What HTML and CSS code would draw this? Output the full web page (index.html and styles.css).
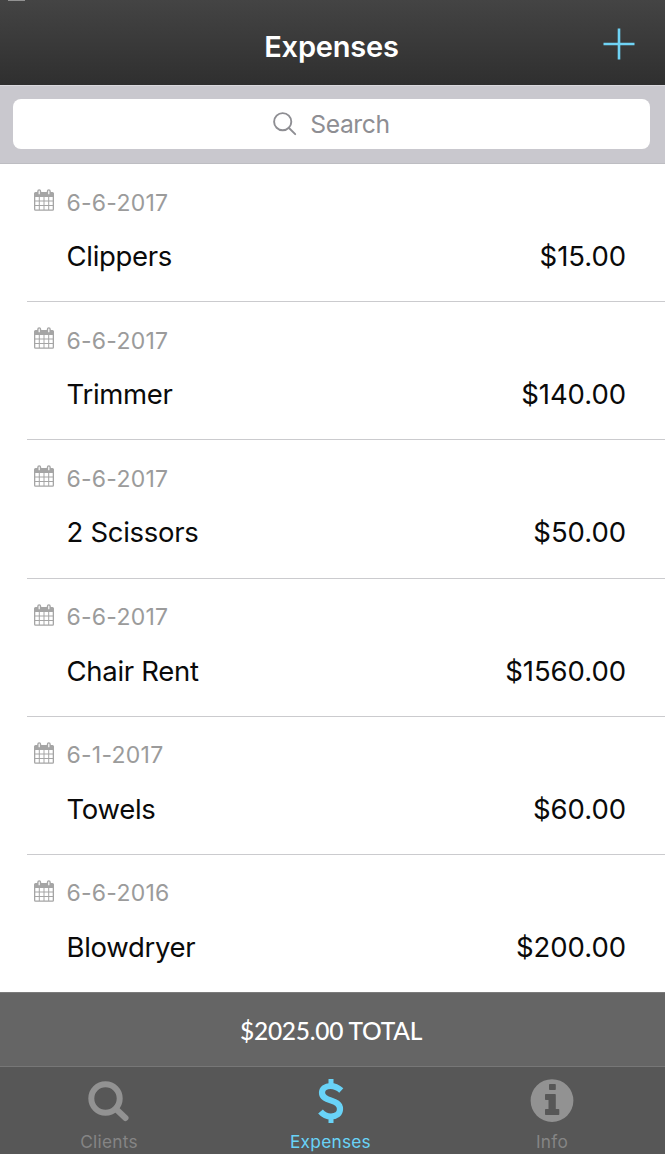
FILE: index.html
```html
<!DOCTYPE html>
<html lang="en">
<head>
<meta charset="utf-8">
<title>Expenses</title>
<link rel="stylesheet" href="styles.css">
</head>
<body>
<svg class="sprite" aria-hidden="true">
  <symbol id="calendar" viewBox="0 0 20 22">
    <path fill="currentColor" fill-rule="evenodd" d="M1.5 3H3.2V2.2a2 2 0 0 1 4 0V3H12.800V2.200a2 2 0 0 1 4 0V3h1.700A1.500 1.500 0 0 1 20 4.500v15.800A1.500 1.500 0 0 1 18.500 21.800h-17A1.500 1.500 0 0 1 0 20.300V4.500A1.500 1.500 0 0 1 1.500 3ZM1.300 8v3.400h3.500V8ZM5.800 8v3.400h3.700V8ZM10.500 8v3.400h3.700V8ZM15.200 8v3.400h3.500V8ZM1.300 12.400v3.700h3.500v-3.700ZM5.800 12.400v3.700h3.700v-3.700ZM10.500 12.400v3.700h3.700v-3.700ZM15.200 12.400v3.700h3.500v-3.700ZM1.300 17.100v3.500h3.500v-3.500ZM5.800 17.100v3.500h3.700v-3.500ZM10.500 17.100v3.500h3.700v-3.500ZM15.200 17.100v3.500h3.500v-3.500ZM4.600 2.200v3h1.200v-3a.6.6 0 0 0-1.200 0ZM14.200 2.200v3h1.200v-3a.6.6 0 0 0-1.200 0Z"/>
  </symbol>
</svg>
<div class="app">
  <header class="navbar">
    <span class="status-fragment"></span>
    <h1 class="title">Expenses</h1>
    <svg class="add" viewBox="0 0 32 32"><path d="M16 0.500V31.500M0.500 16H31.500"/></svg>
  </header>
  <div class="search-bar">
    <div class="search-field">
      <svg class="search-icon" viewBox="0 0 24 24"><circle cx="9.700" cy="9.700" r="8.600"/><path d="M16 16L22.200 22.200"/></svg>
      <span class="search-label">Search</span>
    </div>
  </div>
  <main class="list">
    <article class="row"><div class="date"><svg class="cal"><use href="#calendar"/></svg><span>6-6-2017</span></div><div class="entry"><span class="name">Clippers</span><span class="amount">$15.00</span></div></article>
    <article class="row"><div class="date"><svg class="cal"><use href="#calendar"/></svg><span>6-6-2017</span></div><div class="entry"><span class="name">Trimmer</span><span class="amount">$140.00</span></div></article>
    <article class="row"><div class="date"><svg class="cal"><use href="#calendar"/></svg><span>6-6-2017</span></div><div class="entry"><span class="name">2 Scissors</span><span class="amount">$50.00</span></div></article>
    <article class="row"><div class="date"><svg class="cal"><use href="#calendar"/></svg><span>6-6-2017</span></div><div class="entry"><span class="name">Chair Rent</span><span class="amount">$1560.00</span></div></article>
    <article class="row"><div class="date"><svg class="cal"><use href="#calendar"/></svg><span>6-1-2017</span></div><div class="entry"><span class="name">Towels</span><span class="amount">$60.00</span></div></article>
    <article class="row"><div class="date"><svg class="cal"><use href="#calendar"/></svg><span>6-6-2016</span></div><div class="entry"><span class="name">Blowdryer</span><span class="amount">$200.00</span></div></article>
  </main>
  <div class="total">$2025.00 TOTAL</div>
  <nav class="tabs">
    <div class="tab">
      <svg class="tab-icon" viewBox="0 0 44 46"><circle cx="18.500" cy="20.500" r="14.200" fill="none" stroke="currentColor" stroke-width="6"/><path d="M29 31L38.500 40" stroke="currentColor" stroke-width="6" stroke-linecap="round"/></svg>
      <span class="tab-label">Clients</span>
    </div>
    <div class="tab active">
      <svg class="tab-icon" viewBox="0 0 44 46"><path d="M22 1V8M22 39V45" stroke="currentColor" stroke-width="5"/><path d="M32.300 12.500C28.500 9.200 25.500 8 21.500 8C16.500 8 13 10.700 13 14.700C13 24.500 31 20.300 31 31C31 35.500 27.500 38.500 22 38.500C17.500 38.500 14.500 37 11.500 33.500" fill="none" stroke="currentColor" stroke-width="6.200"/></svg>
      <span class="tab-label">Expenses</span>
    </div>
    <div class="tab">
      <svg class="tab-icon" viewBox="0 0 44 46"><path fill="currentColor" fill-rule="evenodd" d="M22 1.200a21.400 21.400 0 1 1 0 42.800a21.400 21.400 0 1 1 0-42.800ZM19.800 6h5.200q.8 0 .8.800v4.400q0 .8-.8.800h-5.200q-.8 0-.8-.8V6.800q0-.8.8-.8ZM15.800 16h9.200q.8 0 .8.800V31h2.700q.8 0 .8.800v4.400q0 .8-.8.800H15.800q-.8 0-.8-.8v-4.400q0-.8.8-.8h2.700V22h-2.700q-.8 0-.8-.8v-4.400q0-.8.800-.8Z"/></svg>
      <span class="tab-label">Info</span>
    </div>
  </nav>
</div>
</body>
</html>
```
FILE: styles.css
```css
* { box-sizing: border-box; }
body { margin: 0; background: #fff; font-family: Inter, "Liberation Sans", sans-serif; }
.sprite { display: none; }
.app { width: 665px; height: 1154px; display: flex; flex-direction: column; overflow: hidden; }
.navbar { position: relative; height: 85px; flex: none; display: grid; grid-template-columns: 1fr auto 1fr; align-items: center; padding: 9px 30px 0 28px; background: linear-gradient(#444, #2f2f2f); }
.status-fragment { position: absolute; left: 8px; top: 0; width: 17px; height: 1px; background: #929292; }
.title { grid-column: 2; margin: 0; font-size: 29px; line-height: 36px; font-weight: 600; letter-spacing: -0.2px; color: #fff; }
.add { grid-column: 3; justify-self: end; width: 32px; height: 32px; margin-top: -6px; stroke: #6fd3f5; stroke-width: 2.6; }
.search-bar { height: 79px; flex: none; padding: 14px 15px 14px 13px; background: #c9c8ce; border-top: 1px solid #dad9de; border-bottom: 1px solid #bdbdc2; }
.search-field { height: 50px; margin-top: -1px; display: flex; align-items: center; justify-content: center; gap: 13px; background: #fff; border-radius: 8px; }
.search-icon { width: 24px; height: 24px; fill: none; stroke: #8e8e93; stroke-width: 1.900; stroke-linecap: round; }
.search-label { font-size: 24.700px; color: #8e8e93; letter-spacing: -0.400px; }
.list { flex: none; height: 828px; padding-left: 27px; }
.row { height: 138.200px; padding: 25.500px 39px 0 7px; border-bottom: 1px solid #cbcbce; }
.row:last-child { border-bottom: 0; }
.date { height: 26px; display: flex; align-items: center; gap: 12.500px; font-size: 23px; line-height: 26px; letter-spacing: 0.250px; color: #9b9b9b; }
.cal { width: 20px; height: 22px; margin-top: -5px; color: #a5a5a5; }
.entry { display: flex; justify-content: space-between; margin-top: 23.500px; padding-left: 32.500px; font-size: 27.500px; line-height: 34px; color: #0a0a0a; }
.name { letter-spacing: -0.300px; }
.amount { letter-spacing: -0.050px; }
.total { flex: none; height: 74px; border-top: 1px solid #7b7b7b; background: #656565; color: #fff; font: 500 24.500px/75px Lato, sans-serif; letter-spacing: -0.250px; padding-right: 3px; text-align: center; }
.tabs { flex: none; height: 88px; display: grid; grid-template-columns: 218px 225px 218px; background: #575757; border-top: 1px solid #777; }
.tab { display: flex; flex-direction: column; align-items: center; padding-top: 11px; color: #929292; }
.tab-icon { width: 44px; height: 46px; }
.tab-label { margin-top: 7px; font-size: 17.300px; line-height: 22px; letter-spacing: 0.250px; color: #858585; }
.active, .active .tab-label { color: #69d3f7; }
```
